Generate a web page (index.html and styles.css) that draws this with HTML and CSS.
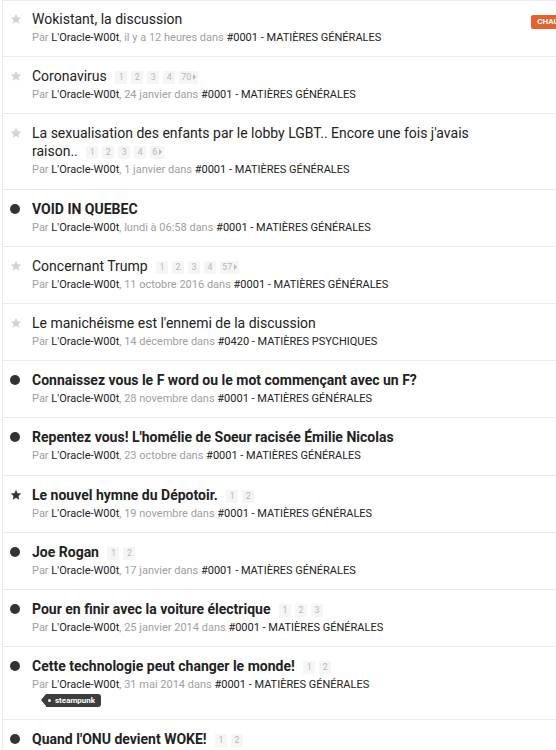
FILE: index.html
```html
<!DOCTYPE html>
<html lang="fr">
<head>
    <meta charset="UTF-8">
    <title>Sujets</title>
    <link rel="stylesheet" href="styles.css">
</head>
<body>
    <ul class="topic-list">
        <li class="topic">
            <div class="topic-icon"><svg class="star" viewBox="0 0 24 24"><path d="M12 1.5l3.1 7.1 7.7.6-5.9 5 1.8 7.5L12 17.7l-6.7 4 1.8-7.5-5.9-5 7.7-.6z"/></svg></div>
            <div class="topic-main">
                <div class="topic-title"><a>Wokistant, la discussion</a></div>
                <div class="topic-meta">Par <b>L'Oracle-W00t</b>, il y a 12 heures dans <b>#0001 - MATIÈRES GÉNÉRALES</b></div>
            </div>
            <span class="badge-hot">CHAUD</span>
        </li>
        <li class="topic">
            <div class="topic-icon"><svg class="star" viewBox="0 0 24 24"><path d="M12 1.5l3.1 7.1 7.7.6-5.9 5 1.8 7.5L12 17.7l-6.7 4 1.8-7.5-5.9-5 7.7-.6z"/></svg></div>
            <div class="topic-main">
                <div class="topic-title"><a>Coronavirus</a>
                    <span class="pages"><span>1</span><span>2</span><span>3</span><span>4</span><span class="last">70</span></span>
                </div>
                <div class="topic-meta">Par <b>L'Oracle-W00t</b>, 24 janvier dans <b>#0001 - MATIÈRES GÉNÉRALES</b></div>
            </div>
        </li>
        <li class="topic">
            <div class="topic-icon"><svg class="star" viewBox="0 0 24 24"><path d="M12 1.5l3.1 7.1 7.7.6-5.9 5 1.8 7.5L12 17.7l-6.7 4 1.8-7.5-5.9-5 7.7-.6z"/></svg></div>
            <div class="topic-main">
                <div class="topic-title"><a>La sexualisation des enfants par le lobby LGBT.. Encore une fois j'avais raison..</a>
                    <span class="pages"><span>1</span><span>2</span><span>3</span><span>4</span><span class="last">6</span></span>
                </div>
                <div class="topic-meta">Par <b>L'Oracle-W00t</b>, 1 janvier dans <b>#0001 - MATIÈRES GÉNÉRALES</b></div>
            </div>
        </li>
        <li class="topic unread">
            <div class="topic-icon"><span class="dot"></span></div>
            <div class="topic-main">
                <div class="topic-title"><a>VOID IN QUEBEC</a></div>
                <div class="topic-meta">Par <b>L'Oracle-W00t</b>, lundi à 06:58 dans <b>#0001 - MATIÈRES GÉNÉRALES</b></div>
            </div>
        </li>
        <li class="topic">
            <div class="topic-icon"><svg class="star" viewBox="0 0 24 24"><path d="M12 1.5l3.1 7.1 7.7.6-5.9 5 1.8 7.5L12 17.7l-6.7 4 1.8-7.5-5.9-5 7.7-.6z"/></svg></div>
            <div class="topic-main">
                <div class="topic-title"><a>Concernant Trump</a>
                    <span class="pages"><span>1</span><span>2</span><span>3</span><span>4</span><span class="last">57</span></span>
                </div>
                <div class="topic-meta">Par <b>L'Oracle-W00t</b>, 11 octobre 2016 dans <b>#0001 - MATIÈRES GÉNÉRALES</b></div>
            </div>
        </li>
        <li class="topic">
            <div class="topic-icon"><svg class="star" viewBox="0 0 24 24"><path d="M12 1.5l3.1 7.1 7.7.6-5.9 5 1.8 7.5L12 17.7l-6.7 4 1.8-7.5-5.9-5 7.7-.6z"/></svg></div>
            <div class="topic-main">
                <div class="topic-title"><a>Le manichéisme est l'ennemi de la discussion</a></div>
                <div class="topic-meta">Par <b>L'Oracle-W00t</b>, 14 décembre dans <b>#0420 - MATIÈRES PSYCHIQUES</b></div>
            </div>
        </li>
        <li class="topic unread">
            <div class="topic-icon"><span class="dot"></span></div>
            <div class="topic-main">
                <div class="topic-title"><a>Connaissez vous le F word ou le mot commençant avec un F?</a></div>
                <div class="topic-meta">Par <b>L'Oracle-W00t</b>, 28 novembre dans <b>#0001 - MATIÈRES GÉNÉRALES</b></div>
            </div>
        </li>
        <li class="topic unread">
            <div class="topic-icon"><span class="dot"></span></div>
            <div class="topic-main">
                <div class="topic-title"><a>Repentez vous! L'homélie de Soeur racisée Émilie Nicolas</a></div>
                <div class="topic-meta">Par <b>L'Oracle-W00t</b>, 23 octobre dans <b>#0001 - MATIÈRES GÉNÉRALES</b></div>
            </div>
        </li>
        <li class="topic unread">
            <div class="topic-icon"><svg class="star dark" viewBox="0 0 24 24"><path d="M12 1.5l3.1 7.1 7.7.6-5.9 5 1.8 7.5L12 17.7l-6.7 4 1.8-7.5-5.9-5 7.7-.6z"/></svg></div>
            <div class="topic-main">
                <div class="topic-title"><a>Le nouvel hymne du Dépotoir.</a>
                    <span class="pages"><span>1</span><span>2</span></span>
                </div>
                <div class="topic-meta">Par <b>L'Oracle-W00t</b>, 19 novembre dans <b>#0001 - MATIÈRES GÉNÉRALES</b></div>
            </div>
        </li>
        <li class="topic unread">
            <div class="topic-icon"><span class="dot"></span></div>
            <div class="topic-main">
                <div class="topic-title"><a>Joe Rogan</a>
                    <span class="pages"><span>1</span><span>2</span></span>
                </div>
                <div class="topic-meta">Par <b>L'Oracle-W00t</b>, 17 janvier dans <b>#0001 - MATIÈRES GÉNÉRALES</b></div>
            </div>
        </li>
        <li class="topic unread">
            <div class="topic-icon"><span class="dot"></span></div>
            <div class="topic-main">
                <div class="topic-title"><a>Pour en finir avec la voiture électrique</a>
                    <span class="pages"><span>1</span><span>2</span><span>3</span></span>
                </div>
                <div class="topic-meta">Par <b>L'Oracle-W00t</b>, 25 janvier 2014 dans <b>#0001 - MATIÈRES GÉNÉRALES</b></div>
            </div>
        </li>
        <li class="topic unread">
            <div class="topic-icon"><span class="dot"></span></div>
            <div class="topic-main">
                <div class="topic-title"><a>Cette technologie peut changer le monde!</a>
                    <span class="pages"><span>1</span><span>2</span></span>
                </div>
                <div class="topic-meta">Par <b>L'Oracle-W00t</b>, 31 mai 2014 dans <b>#0001 - MATIÈRES GÉNÉRALES</b></div>
                <div class="tags"><span class="tag">steampunk</span></div>
            </div>
        </li>
        <li class="topic unread">
            <div class="topic-icon"><span class="dot"></span></div>
            <div class="topic-main">
                <div class="topic-title"><a>Quand l'ONU devient WOKE!</a>
                    <span class="pages"><span>1</span><span>2</span></span>
                </div>
                <div class="topic-meta">Par <b>L'Oracle-W00t</b>, 2 janvier dans <b>#0001 - MATIÈRES GÉNÉRALES</b></div>
            </div>
        </li>
    </ul>
</body>
</html>
```

FILE: styles.css
```css
* {
    margin: 0;
    padding: 0;
    box-sizing: border-box;
}

html, body {
    overflow: hidden;
}

body {
    background: #fff;
    color: #222;
    font-family: Roboto, "Liberation Sans", sans-serif;
}

.topic-list {
    list-style: none;
    width: 583px;
    margin: 0 0 0 2px;
    border-top: 1px solid #ebebeb;
    border-left: 1px solid #ebebeb;
}

.topic {
    display: flex;
    align-items: flex-start;
    padding: 10px 15px 10.2px 0;
    border-bottom: 1px solid #ebebeb;
}

.topic:first-child {
    padding-top: 9px;
}

.topic-icon {
    width: 29px;
    flex-shrink: 0;
    height: 18px;
    padding-left: 7px;
    display: flex;
    align-items: center;
}

.star {
    width: 12px;
    height: 12px;
    fill: #d4d4d4;
}

.star.dark {
    fill: #333;
}

.dot {
    width: 10px;
    height: 10px;
    border-radius: 50%;
    background: #333;
}

.topic-main {
    flex: 1;
    min-width: 0;
    padding-right: 20px;
}

.topic-title {
    font-size: 14px;
    line-height: 18px;
    color: #222;
    max-width: 445px;
}

.unread .topic-title a {
    font-weight: bold;
}

.pages {
    display: inline-flex;
    gap: 4px;
    margin-left: 5px;
    vertical-align: 1px;
}

.pages span {
    display: inline-block;
    min-width: 12px;
    height: 13px;
    padding: 0 2px;
    background: #f5f5f5;
    color: #b8b8b8;
    font-size: 9px;
    font-weight: normal;
    line-height: 13px;
    text-align: center;
}

.pages .last::after {
    content: "";
    display: inline-block;
    margin-left: 2px;
    border-left: 3px solid #b8b8b8;
    border-top: 3px solid transparent;
    border-bottom: 3px solid transparent;
    vertical-align: 0;
}

.topic-meta {
    margin-top: 2px;
    font-size: 11px;
    line-height: 16px;
    color: #a0a0a0;
    white-space: nowrap;
}

.topic-meta b {
    font-weight: normal;
    color: #222;
}

.badge-hot {
    margin-top: 5px;
    padding: 0 6px;
    height: 14px;
    background: #e3632d;
    color: #fff;
    border-radius: 2px;
    font-size: 8px;
    font-weight: bold;
    line-height: 14px;
    flex-shrink: 0;
}

.tags {
    display: flex;
    margin: 1px 0 2px;
    height: 13px;
}

.tag {
    position: relative;
    margin-left: 14px;
    padding: 0 6px 0 9px;
    height: 13px;
    background: #3d3d3d;
    color: #fff;
    border-radius: 0 3px 3px 0;
    font-size: 8px;
    font-weight: bold;
    line-height: 13px;
}

.tag::before {
    content: "";
    position: absolute;
    left: -5px;
    top: 0;
    border-right: 5px solid #3d3d3d;
    border-top: 6.5px solid transparent;
    border-bottom: 6.5px solid transparent;
}

.tag::after {
    content: "";
    position: absolute;
    left: 2px;
    top: 5px;
    width: 3px;
    height: 3px;
    border-radius: 50%;
    background: #fff;
}
```
